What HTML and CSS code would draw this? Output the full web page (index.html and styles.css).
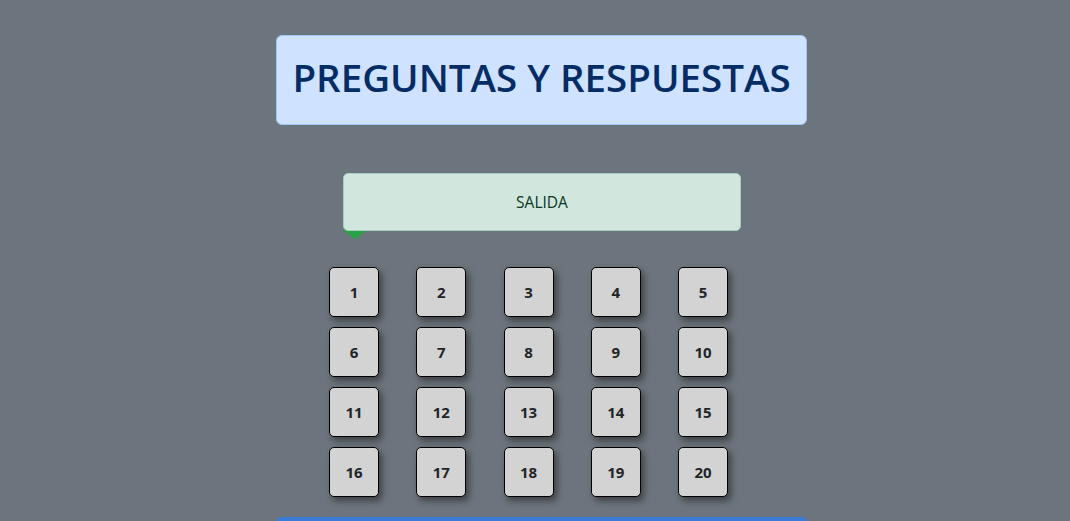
FILE: index.html
```html
<!DOCTYPE html>
<html lang="es">
<head>
<meta charset="utf-8">
<title>Preguntas y respuestas</title>
<link rel="stylesheet" href="styles.css">
</head>
<body>
<main class="page">
  <header class="title-box">
    <h1 class="title">PREGUNTAS Y RESPUESTAS</h1>
  </header>
  <div class="start">
    <div class="start-box">SALIDA</div>
    <svg class="marker" width="24" height="10" viewBox="0 0 24 10"><path d="M0 0 H24 L14 8 Q12 9.6 10 8 Z" fill="#27a244"/></svg>
  </div>
  <div class="grid">
    <button class="cell">1</button><button class="cell">2</button><button class="cell">3</button><button class="cell">4</button><button class="cell">5</button>
    <button class="cell">6</button><button class="cell">7</button><button class="cell">8</button><button class="cell">9</button><button class="cell">10</button>
    <button class="cell">11</button><button class="cell">12</button><button class="cell">13</button><button class="cell">14</button><button class="cell">15</button>
    <button class="cell">16</button><button class="cell">17</button><button class="cell">18</button><button class="cell">19</button><button class="cell">20</button>
  </div>
  <div class="bottom-bar"></div>
</main>
</body>
</html>
```
FILE: styles.css
```css
html, body {
  margin: 0;
  padding: 0;
  background: #6c757d;
  font-family: "Open Sans", "Noto Sans", sans-serif;
  overflow: hidden;
}
.page {
  display: flex;
  flex-direction: column;
  align-items: flex-start;
  padding-top: 35px;
  height: 521px;
  box-sizing: border-box;
  overflow: hidden;
}
.title-box {
  margin-left: 276px;
  width: 531px;
  height: 90px;
  flex-shrink: 0;
  box-sizing: border-box;
  background: #cfe2ff;
  border: 1px solid #9ec5fe;
  border-radius: 6px;
  display: flex;
  align-items: center;
  justify-content: center;
  padding-bottom: 5px;
}
.title {
  margin: 0;
  color: #052c65;
  font-size: 38.5px;
  font-weight: 600;
  line-height: 1.2;
}
.start {
  position: relative;
  margin-left: 343px;
  margin-top: 48px;
  flex-shrink: 0;
}
.start-box {
  width: 398px;
  height: 58px;
  box-sizing: border-box;
  background: #d1e7dd;
  border: 1px solid #a3cfbb;
  border-radius: 5px;
  color: #0a3622;
  font-size: 15.5px;
  font-weight: 500;
  display: flex;
  align-items: center;
  justify-content: center;
  position: relative;
  z-index: 1;
}
.marker {
  position: absolute;
  left: 0;
  top: 57px;
  display: block;
}
.grid {
  margin-left: 329px;
  margin-top: 36px;
  display: grid;
  grid-template-columns: repeat(5, 50px);
  grid-auto-rows: 50px;
  column-gap: 37.25px;
  row-gap: 10px;
  flex-shrink: 0;
}
.cell {
  width: 50px;
  height: 50px;
  box-sizing: border-box;
  background: #d3d3d3;
  border: 1px solid #000;
  border-radius: 5px;
  box-shadow: 3px 4px 7px rgba(0, 0, 0, 0.45);
  font-family: "Open Sans", "Noto Sans", sans-serif;
  font-size: 15px;
  font-weight: 700;
  color: #212529;
  padding: 0;
  display: flex;
  align-items: center;
  justify-content: center;
}
.bottom-bar {
  margin-left: 276px;
  margin-top: 20px;
  width: 531px;
  height: 40px;
  flex-shrink: 0;
  background: #3a7bd5;
  border-radius: 5px 5px 0 0;
}
```
